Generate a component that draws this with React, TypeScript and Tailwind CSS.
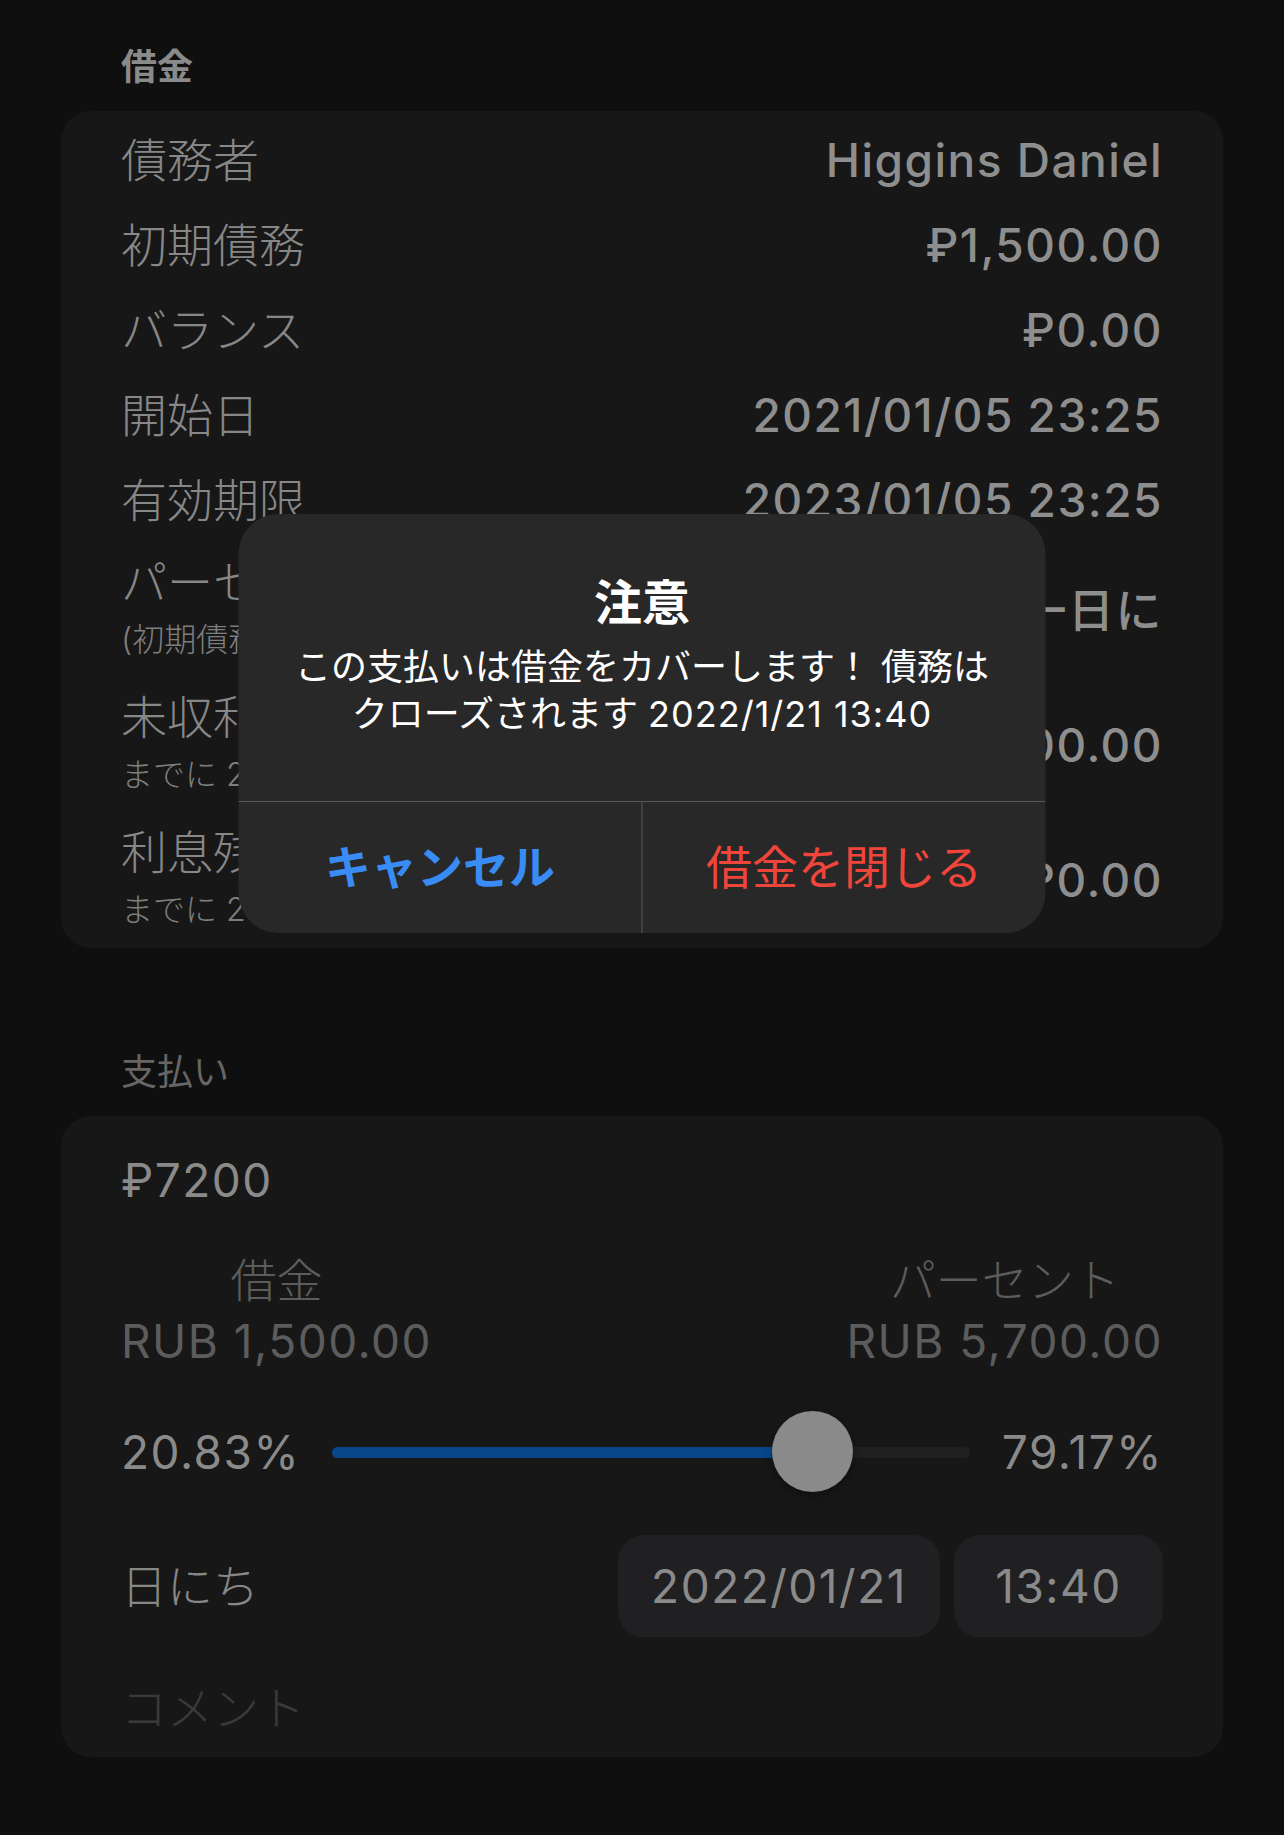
const font = "font-['Inter','Noto_Sans_CJK_JP',sans-serif]";

const rows = [
  { label: "債務者", value: "Higgins Daniel" },
  { label: "初期債務", value: "₽1,500.00" },
  { label: "バランス", value: "₽0.00" },
  { label: "開始日", value: "2021/01/05 23:25" },
  { label: "有効期限", value: "2023/01/05 23:25" },
];

const subRows = [
  { label: "パーセント", sub: "(初期債務から)", value: "1% 一日に" },
  { label: "未収利息", sub: "までに 2022/01/21 13:40", value: "₽5,700.00" },
  { label: "利息残高", sub: "までに 2022/01/21 13:40", value: "₽0.00" },
];

function Slider() {
  return (
    <div className="relative flex-1 h-[84px] flex items-center">
      <div className="relative w-full h-[11px] rounded-full bg-[#202020]">
        <div className="absolute left-0 top-0 h-full rounded-full bg-[#07478a] w-[calc((100%-84px)*0.7917+42px)]" />
      </div>
      {/* thumb */}
      <div className="absolute top-[1px] left-[calc((100%-84px)*0.7917+1px)] w-[81px] h-[81px] rounded-full bg-[#8a8a8a] shadow-[0_3px_10px_rgba(0,0,0,0.35)]" />
    </div>
  );
}

export default function App() {
  return (
    <div className={`relative w-full min-h-[1835px] bg-[#0f0f0f] ${font}`}>
      {/* 借金 */}
      <div className="px-[61px] pt-[45px]">
        <h2 className="px-[60px] text-[36px] leading-[44px] font-bold text-[#8a8a8a]">借金</h2>
        <div className="mt-[22px] rounded-[30px] bg-[#171717] px-[60px] pt-[6px] h-[837px]">
          {rows.map((r) => (
            <div key={r.label} className="h-[85px] flex items-center justify-between">
              <span className="text-[46px] leading-[52px] font-light text-[#878787]">{r.label}</span>
              <span className="text-[46px] leading-[52px] font-medium tracking-[1.5px] text-[#8e8e8e]">{r.value}</span>
            </div>
          ))}
          {subRows.map((r) => (
            <div key={r.label} className="h-[135px] flex items-center justify-between">
              <div className="self-start pt-[14px]">
                <div className="text-[46px] leading-[52px] font-light text-[#878787]">{r.label}</div>
                <div className="mt-[12px] text-[32px] leading-[40px] font-light text-[#7e7e7e]">{r.sub}</div>
              </div>
              <span className="text-[46px] leading-[52px] font-medium tracking-[1.5px] text-[#8e8e8e]">{r.value}</span>
            </div>
          ))}
        </div>

        {/* 支払い */}
        <h2 className="mt-[102px] px-[60px] text-[36px] leading-[44px] text-[#666666]">支払い</h2>
        <div className="mt-[22px] rounded-[30px] bg-[#171717] px-[60px] pt-[38px] pb-[23px]">
          <div className="text-[46px] leading-[52px] tracking-[1.5px] text-[#8a8a8a]">₽7200</div>

          <div className="mt-[48px] flex justify-between text-[#5c5c5c]">
            <div className="flex flex-col items-center">
              <span className="text-[46px] leading-[52px] font-light">借金</span>
              <span className="mt-[9px] text-[46px] leading-[52px] tracking-[1.5px]">RUB 1,500.00</span>
            </div>
            <div className="flex flex-col items-center">
              <span className="text-[46px] leading-[52px] font-light">パーセント</span>
              <span className="mt-[9px] text-[46px] leading-[52px] tracking-[1.5px]">RUB 5,700.00</span>
            </div>
          </div>

          <div className="mt-[43px] flex items-center gap-[32px] text-[46px] leading-[52px] tracking-[1.5px] text-[#8a8a8a]">
            <span>20.83%</span>
            <Slider />
            <span>79.17%</span>
          </div>

          <div className="mt-[41px] flex items-center justify-between">
            <span className="text-[46px] leading-[52px] font-light text-[#878787]">日にち</span>
            <div className="flex gap-[14px] tracking-[1.5px]">
              <div className="w-[322px] h-[102px] rounded-[26px] bg-[#202022] flex items-center justify-center text-[46px] text-[#8a8a8a]">
                2022/01/21
              </div>
              <div className="w-[209px] h-[102px] rounded-[26px] bg-[#202022] flex items-center justify-center text-[46px] text-[#8a8a8a]">
                13:40
              </div>
            </div>
          </div>

          <div className="mt-[45px] text-[46px] leading-[52px] font-light text-[#3a3a3a]">コメント</div>
        </div>
      </div>

      {/* alert */}
      <div className="absolute top-[514px] left-1/2 -translate-x-1/2 w-[807px] rounded-[40px] bg-[#282828] overflow-hidden">
        <div className="h-[287px] pt-[61px] flex flex-col items-center text-center">
          <div className="text-[48px] leading-[56px] font-bold text-white">注意</div>
          <div className="mt-[13px] text-[36px] leading-[47px] text-white">
            この支払いは借金をカバーします！ 債務は
            <br />
            クローズされます <span className="tracking-[1px]">2022/1/21 13:40</span>
          </div>
        </div>
        <div className="h-[132px] flex border-t border-[#595959]">
          <button className="flex-1 flex items-center justify-center text-[46px] font-bold text-[#3a8cf5]">
            キャンセル
          </button>
          <button className="flex-1 flex items-center justify-center border-l border-[#595959] text-[46px] text-[#f0453a]">
            借金を閉じる
          </button>
        </div>
      </div>
    </div>
  );
}
